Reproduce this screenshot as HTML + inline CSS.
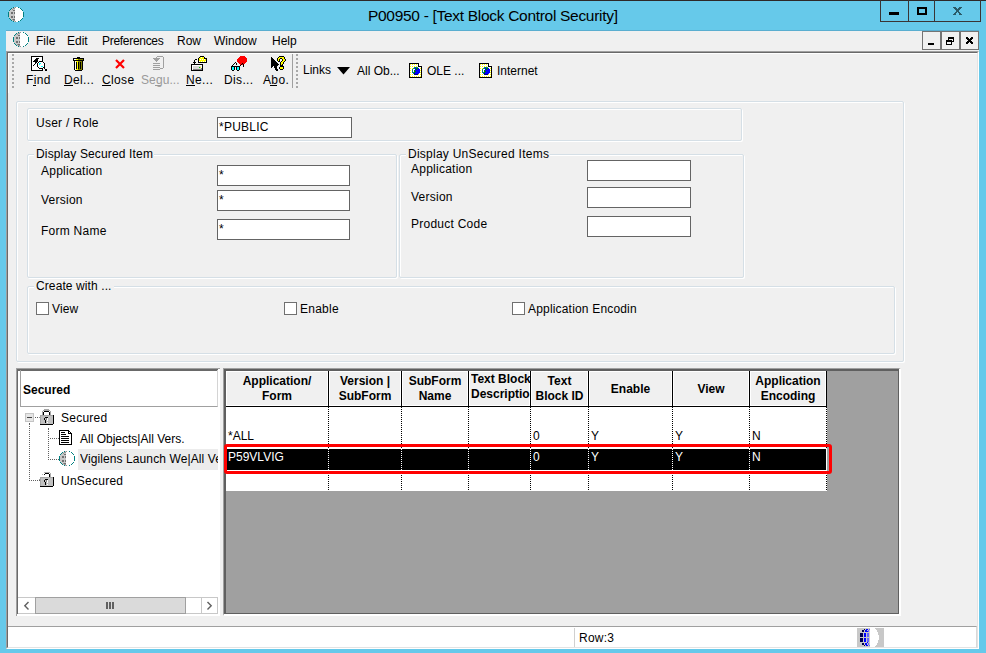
<!DOCTYPE html>
<html><head><meta charset="utf-8">
<style>
*{margin:0;padding:0;box-sizing:border-box}
html,body{width:986px;height:653px;overflow:hidden}
body{position:relative;background:#66c9ea;font-family:"Liberation Sans",sans-serif;font-size:12px;color:#000}
.a{position:absolute}
.t{position:absolute;white-space:nowrap;line-height:1}
svg{position:absolute;overflow:visible}
.gb{position:absolute;border:1px solid #d5dfe6;border-radius:2px;box-shadow:inset 1px 1px 0 #fff,1px 1px 0 #fff}
.ed{position:absolute;background:#fff;border:1px solid #646464}
.cb{position:absolute;width:13px;height:13px;background:#fff;border:1px solid #707070}
.hd{position:absolute;font-weight:bold;text-align:center;line-height:15px;white-space:nowrap}
.vl{position:absolute;width:1px;background:#000}
.dl{position:absolute;width:1px;background:repeating-linear-gradient(#000 0 1px,transparent 1px 2px)}
.dh{position:absolute;height:1px;background:repeating-linear-gradient(90deg,#000 0 1px,transparent 1px 2px)}
.tdl{position:absolute;width:1px;border-left:1px dotted #606060}
.tdh{position:absolute;height:1px;border-top:1px dotted #606060}
</style></head><body>
<svg width="0" height="0" style="position:absolute">
<defs>
<pattern id="chk" width="2" height="2" patternUnits="userSpaceOnUse"><rect width="2" height="2" fill="#c8c8c8"/><rect width="1" height="1" fill="#8a8a8a"/></pattern>
<pattern id="ychk" width="2" height="2" patternUnits="userSpaceOnUse"><rect width="2" height="2" fill="#fff"/><rect width="1" height="1" fill="#ff0"/><rect x="1" y="1" width="1" height="1" fill="#ff0"/></pattern>
<g id="globe" shape-rendering="crispEdges"><path d="M6 0h1v1h-1zM4 1h3v1h-3zM3 2h4v1h-4zM2 3h5v1h-5zM1 4h6v1h-6zM1 5h6v1h-6zM1 6h6v1h-6zM1 7h6v1h-6zM1 8h6v1h-6zM1 9h6v1h-6zM1 10h6v1h-6zM2 11h5v1h-5zM3 12h4v1h-4zM4 13h3v1h-3zM6 14h1v1h-1z" fill="#c8c8c8"/><path d="M7 0h3v1h-3zM7 1h5v1h-5zM7 2h6v1h-6zM7 3h7v1h-7zM7 4h8v1h-8zM7 5h8v1h-8zM7 6h8v1h-8zM7 7h8v1h-8zM7 8h8v1h-8zM7 9h8v1h-8zM7 10h8v1h-8zM7 11h7v1h-7zM7 12h6v1h-6zM7 13h5v1h-5zM7 14h3v1h-3z" fill="#fff"/><path d="M3 5h2v2h-2zM6 5h1v2h-1zM3 9h2v2h-2zM6 9h1v2h-1zM5 3h2v1h-2zM5 12h2v1h-2z" fill="#707070"/><path d="M7 0h1v1h-1zM7 14h1v1h-1zM5 1h2v1h-2zM5 13h2v1h-2zM4 2h1v1h-1zM4 12h1v1h-1z" fill="#959595"/><path d="M5 0h1v1h-1zM10 0h1v1h-1zM3 1h1v1h-1zM12 1h1v1h-1zM2 2h1v1h-1zM13 2h1v1h-1zM1 3h1v1h-1zM14 3h1v1h-1zM0 5h1v5h-1zM15 5h1v5h-1zM1 11h1v1h-1zM14 11h1v1h-1zM2 12h1v1h-1zM13 12h1v1h-1zM3 13h1v1h-1zM12 13h1v1h-1zM5 14h1v1h-1zM10 14h1v1h-1z" fill="#008080"/></g>
<g id="lockbody" shape-rendering="crispEdges">
<rect x="2" y="7" width="13" height="9" fill="#c0c0c0"/>
<rect x="2" y="7" width="13" height="1" fill="#a4a4a4"/><rect x="2" y="7" width="1" height="9" fill="#a4a4a4"/>
<rect x="15" y="7" width="1" height="9" fill="#000"/><rect x="2" y="16" width="13" height="1" fill="#000"/>
<rect x="1" y="9" width="1" height="1" fill="#999"/>
<path d="M7 9h3v1h-3zM6 10h1v2h-1zM7 12h1v3h-1z" fill="#000"/>
<path d="M8 10h1v2h-1z" fill="#808080"/>
<path d="M9 10h1v3h-1zM9 14h1v1h-1z" fill="#fff"/>
</g>
<g id="lock" shape-rendering="crispEdges">
<path d="M6 1h5v1h-5zM5 2h7v1h-7zM4 3h1v4h-1zM12 3h1v4h-1z" fill="#a8a8a8"/>
<path d="M6 3h5v1h-5zM5 4h1v3h-1zM11 4h1v3h-1z" fill="#000"/>
<use href="#lockbody"/>
</g>
<g id="ulock" shape-rendering="crispEdges">
<path d="M6 2h6v1h-6zM12 3h1v4h-1zM4 4h1v1h-1z" fill="#b0b0b0"/>
<path d="M7 3h4v1h-4zM6 4h1v1h-1zM11 4h1v3h-1z" fill="#000"/>
<use href="#lockbody"/>
</g>
<g id="ydoc">
<path d="M0.5 0.5 H9.5 L12.5 3.5 V14.5 H0.5 Z" fill="url(#ychk)" stroke="#000" stroke-width="1"/>
<path d="M9.5 0.5 V3.5 H12.5" fill="#fff" stroke="#000" stroke-width="1"/>
<circle cx="6.5" cy="8" r="3.6" fill="#0000ff"/>
<path d="M3 8 Q3.5 5 6 4.5 L8 5.5 L6.5 7 L7 9.5 L5 10 Z" fill="#008080"/>
<path d="M4 6.5 L6 8 L4.5 9.5 Z" fill="#fff"/>
<path d="M6.5 6 L8.5 6.5 L7 9 Z" fill="#008000"/>
</g>
</defs>
</svg>

<!-- top border -->
<div class="a" style="left:0;top:0;width:986px;height:1px;background:#2e2828"></div>
<svg style="left:8px;top:7px" width="16" height="16"><use href="#globe"/></svg>
<!-- title -->
<div class="t" style="left:368px;top:8px;font-size:15.5px;color:#000;letter-spacing:-0.3px">P00950 - [Text Block Control Security]</div>
<!-- window buttons -->
<div class="a" style="left:880px;top:0;width:101px;height:22px;border:1px solid #3a3434;border-top:none"></div>
<div class="a" style="left:908px;top:0;width:1px;height:22px;background:#3a3434"></div>
<div class="a" style="left:934px;top:0;width:1px;height:22px;background:#3a3434"></div>
<div class="a" style="left:889px;top:12px;width:10px;height:3px;background:#000"></div>
<div class="a" style="left:917px;top:7px;width:10px;height:8px;border:2px solid #000"></div>
<svg style="left:953px;top:7px" width="9" height="8" shape-rendering="crispEdges"><path d="M0 0h3v1h-3zM6 0h3v1h-3zM1 1h3v1h-3zM5 1h3v1h-3zM2 2h5v1h-5zM3 3h3v2h-3zM2 5h2v1h-2zM5 5h2v1h-2zM1 6h2v1h-2zM6 6h2v1h-2zM0 7h3v1h-3zM6 7h3v1h-3z" fill="#2a5a68"/></svg>

<!-- MDI child -->
<div class="a" style="left:6px;top:30px;width:973px;height:619px;background:#f0f0f0;border-top:1px solid #5aaed0"></div>
<svg style="left:13px;top:32px" width="16" height="16"><use href="#globe"/></svg>
<!-- menu -->
<div class="t" style="left:36px;top:35px">File</div>
<div class="t" style="left:67px;top:35px">Edit</div>
<div class="t" style="left:102px;top:35px;letter-spacing:-0.3px">Preferences</div>
<div class="t" style="left:177px;top:35px">Row</div>
<div class="t" style="left:214px;top:35px">Window</div>
<div class="t" style="left:272px;top:35px">Help</div>
<!-- MDI buttons -->
<div class="a" style="left:922px;top:31px;width:19px;height:19px;background:#f0f0f0;border:1px solid #747474"></div>
<div class="a" style="left:941px;top:31px;width:19px;height:19px;background:#f0f0f0;border:1px solid #747474"></div>
<div class="a" style="left:960px;top:31px;width:19px;height:19px;background:#f0f0f0;border:1px solid #747474"></div>
<div class="a" style="left:928px;top:43px;width:6px;height:2px;background:#000"></div>
<div class="a" style="left:948px;top:37px;width:6px;height:5px;border:1px solid #000;border-top-width:2px"></div>
<div class="a" style="left:946px;top:40px;width:6px;height:5px;border:1px solid #000;border-top-width:2px;background:#f0f0f0"></div>
<svg style="left:966px;top:37px" width="7" height="7" shape-rendering="crispEdges"><path d="M0 0h2v1h-2zM5 0h2v1h-2zM0 1h3v1h-3zM4 1h3v1h-3zM1 2h5v1h-5zM2 3h3v1h-3zM1 4h5v1h-5zM0 5h3v1h-3zM4 5h3v1h-3zM0 6h2v1h-2zM5 6h2v1h-2z" fill="#000"/></svg>

<!-- client sunken area -->
<div class="a" style="left:6px;top:51px;width:973px;height:598px;border-left:1px solid #a0a0a0;border-top:1px solid #a0a0a0;border-right:1px solid #fff;border-bottom:1px solid #fff"></div>
<div class="a" style="left:7px;top:52px;width:971px;height:596px;border-left:1px solid #696969;border-top:1px solid #696969;border-right:1px solid #e3e3e3;border-bottom:1px solid #e3e3e3"></div>
<div class="a" style="left:8px;top:53px;width:969px;height:1px;background:#fff"></div>
<div class="a" style="left:8px;top:53px;width:1px;height:40px;background:#fff"></div>

<!-- toolbar -->
<div class="a" style="left:12px;top:54px;width:2px;height:35px;background:repeating-linear-gradient(#a8a8a8 0 2px,transparent 2px 4px)"></div>
<div class="a" style="left:33px;top:85px;width:3px;height:1px;background:#000"></div>
<div class="a" style="left:64px;top:85px;width:9px;height:1px;background:#000"></div>
<div class="a" style="left:102px;top:85px;width:9px;height:1px;background:#000"></div>
<div class="a" style="left:155px;top:85px;width:6px;height:1px;background:#9a9a9a"></div>
<div class="a" style="left:186px;top:85px;width:9px;height:1px;background:#000"></div>
<div class="a" style="left:270px;top:85px;width:7px;height:1px;background:#000"></div>
<!-- toolbar icons -->
<svg style="left:29px;top:54px" width="18" height="18" shape-rendering="crispEdges"><path d="M2 2h12v1h-12zM2 3h1v1h-1zM13 3h1v1h-1zM2 4h1v1h-1zM7 4h3v1h-3zM13 4h1v1h-1zM2 5h1v1h-1zM6 5h3v1h-3zM13 5h1v1h-1zM2 6h1v1h-1zM5 6h4v1h-4zM13 6h1v1h-1zM2 7h1v1h-1zM4 7h5v1h-5zM10 7h4v1h-4zM2 8h1v1h-1zM6 8h2v1h-2zM9 8h1v1h-1zM14 8h1v1h-1zM2 9h1v1h-1zM6 9h1v1h-1zM8 9h1v1h-1zM15 9h1v1h-1zM2 10h1v1h-1zM5 10h1v1h-1zM8 10h1v1h-1zM15 10h1v1h-1zM2 11h1v1h-1zM4 11h1v1h-1zM8 11h1v1h-1zM15 11h1v1h-1zM2 12h1v1h-1zM8 12h1v1h-1zM15 12h1v1h-1zM2 13h1v1h-1zM9 13h1v1h-1zM14 13h2v1h-2zM2 14h1v1h-1zM10 14h4v1h-4zM15 14h1v1h-1zM2 15h1v1h-1zM13 15h1v1h-1zM16 15h2v1h-2zM2 16h12v1h-12zM16 16h2v1h-2z" fill="#000"/><path d="M3 3h10v1h-10zM3 4h4v1h-4zM10 4h3v1h-3zM3 5h3v1h-3zM9 5h4v1h-4zM3 6h2v1h-2zM9 6h4v1h-4zM3 7h1v1h-1zM9 7h1v1h-1zM3 8h3v1h-3zM8 8h1v1h-1zM10 8h4v1h-4zM3 9h3v1h-3zM7 9h1v1h-1zM9 9h1v1h-1zM12 9h3v1h-3zM3 10h2v1h-2zM6 10h2v1h-2zM9 10h1v1h-1zM11 10h4v1h-4zM3 11h1v1h-1zM5 11h3v1h-3zM9 11h6v1h-6zM3 12h5v1h-5zM9 12h3v1h-3zM14 12h1v1h-1zM3 13h6v1h-6zM10 13h4v1h-4zM3 14h7v1h-7zM14 14h1v1h-1zM3 15h10v1h-10z" fill="#fff"/><path d="M10 9h2v1h-2zM10 10h1v1h-1zM12 12h2v1h-2z" fill="#0ff"/></svg>
<svg style="left:69px;top:54px" width="16" height="17" shape-rendering="crispEdges"><path d="M8 3h3v1h-3zM4 4h11v1h-11zM4 5h1v1h-1zM14 5h1v1h-1zM4 6h11v1h-11zM5 7h1v1h-1zM13 7h1v1h-1zM5 8h1v1h-1zM7 8h1v1h-1zM9 8h1v1h-1zM11 8h1v1h-1zM13 8h1v1h-1zM5 9h1v1h-1zM7 9h1v1h-1zM9 9h1v1h-1zM11 9h1v1h-1zM13 9h1v1h-1zM5 10h1v1h-1zM7 10h1v1h-1zM9 10h1v1h-1zM11 10h1v1h-1zM13 10h1v1h-1zM5 11h1v1h-1zM7 11h1v1h-1zM9 11h1v1h-1zM11 11h1v1h-1zM13 11h1v1h-1zM5 12h1v1h-1zM7 12h1v1h-1zM9 12h1v1h-1zM11 12h1v1h-1zM13 12h1v1h-1zM5 13h1v1h-1zM7 13h1v1h-1zM9 13h1v1h-1zM11 13h1v1h-1zM13 13h1v1h-1zM5 14h1v1h-1zM7 14h1v1h-1zM9 14h1v1h-1zM11 14h1v1h-1zM13 14h1v1h-1zM5 15h1v1h-1zM13 15h1v1h-1zM6 16h7v1h-7z" fill="#000"/><path d="M5 5h2v1h-2zM6 7h1v1h-1zM6 8h1v1h-1zM6 9h1v1h-1zM6 10h1v1h-1zM6 11h1v1h-1zM6 12h1v1h-1zM6 13h1v1h-1zM6 14h1v1h-1zM6 15h1v1h-1z" fill="#fff"/><path d="M7 5h2v1h-2zM7 7h2v1h-2zM8 8h1v1h-1zM8 9h1v1h-1zM8 10h1v1h-1zM8 11h1v1h-1zM8 12h1v1h-1zM8 13h1v1h-1zM8 14h1v1h-1zM7 15h2v1h-2z" fill="#ff0"/><path d="M9 5h5v1h-5zM9 7h4v1h-4zM10 8h1v1h-1zM12 8h1v1h-1zM10 9h1v1h-1zM12 9h1v1h-1zM10 10h1v1h-1zM12 10h1v1h-1zM10 11h1v1h-1zM12 11h1v1h-1zM10 12h1v1h-1zM12 12h1v1h-1zM10 13h1v1h-1zM12 13h1v1h-1zM10 14h1v1h-1zM12 14h1v1h-1zM9 15h4v1h-4z" fill="#808000"/></svg>
<svg style="left:150px;top:54px" width="14" height="16" shape-rendering="crispEdges"><path d="M7 2h6v1h-6zM6 3h1v1h-1zM13 3h1v1h-1zM3 4h7v1h-7zM13 4h1v1h-1zM4 5h5v1h-5zM13 5h1v1h-1zM5 6h3v1h-3zM13 6h1v1h-1zM6 7h1v1h-1zM13 7h1v1h-1zM13 8h1v1h-1zM3 9h7v1h-7zM13 9h1v1h-1zM13 10h1v1h-1zM3 11h7v1h-7zM13 11h1v1h-1zM13 12h1v1h-1zM3 13h7v1h-7zM13 13h1v1h-1zM10 14h3v1h-3zM3 15h7v1h-7z" fill="#a0a0a0"/></svg>
<svg style="left:188px;top:54px" width="19" height="17" shape-rendering="crispEdges"><path d="M12 2h4v1h-4zM11 3h1v1h-1zM16 3h1v1h-1zM10 4h1v1h-1zM16 4h3v1h-3zM7 5h2v1h-2zM10 5h1v1h-1zM18 5h1v1h-1zM6 6h1v1h-1zM10 6h1v1h-1zM18 6h1v1h-1zM6 7h1v1h-1zM10 7h1v1h-1zM18 7h1v1h-1zM5 8h3v1h-3zM10 8h9v1h-9zM6 9h1v1h-1zM3 10h12v1h-12zM3 11h1v1h-1zM14 11h1v1h-1zM3 12h1v1h-1zM14 12h1v1h-1zM3 13h1v1h-1zM14 13h1v1h-1zM3 14h1v1h-1zM14 14h1v1h-1zM3 15h1v1h-1zM14 15h1v1h-1zM3 16h12v1h-12z" fill="#000"/><path d="M12 3h1v1h-1zM14 3h2v1h-2zM11 4h5v1h-5zM11 5h1v1h-1zM13 5h1v1h-1zM15 5h1v1h-1zM17 5h1v1h-1zM11 6h7v1h-7zM12 7h1v1h-1zM14 7h1v1h-1zM16 7h1v1h-1z" fill="#ff0"/><path d="M13 3h1v1h-1zM12 5h1v1h-1zM14 5h1v1h-1zM16 5h1v1h-1zM11 7h1v1h-1zM13 7h1v1h-1zM15 7h1v1h-1zM17 7h1v1h-1zM4 11h10v1h-10zM4 12h1v1h-1zM13 12h1v1h-1zM4 13h1v1h-1zM13 13h1v1h-1zM4 14h1v1h-1zM4 15h1v1h-1z" fill="#fff"/><path d="M5 12h8v1h-8zM5 13h6v1h-6zM5 14h8v1h-8z" fill="#d8d8d8"/><path d="M11 13h1v1h-1z" fill="#00c000"/><path d="M12 13h1v1h-1z" fill="#ffff00"/><path d="M13 14h1v1h-1zM5 15h9v1h-9z" fill="#808080"/></svg>
<svg style="left:229px;top:54px" width="18" height="18" shape-rendering="crispEdges"><path d="M11 2h5v1h-5zM10 3h7v1h-7zM9 4h9v1h-9zM8 5h10v1h-10zM8 6h10v1h-10zM8 7h10v1h-10zM9 8h8v1h-8zM10 9h3v1h-3zM14 9h2v1h-2zM11 10h1v1h-1zM13 10h1v1h-1z" fill="#f00"/><path d="M6 8h1v1h-1zM5 9h1v1h-1zM7 9h1v1h-1zM13 9h1v1h-1zM4 10h1v1h-1zM7 10h1v1h-1zM12 10h1v1h-1zM14 10h1v1h-1zM3 11h1v1h-1zM11 11h1v1h-1zM14 11h1v1h-1zM2 12h9v1h-9zM14 12h1v1h-1zM2 13h1v1h-1zM5 13h1v1h-1zM7 13h1v1h-1zM10 13h1v1h-1zM2 14h1v1h-1zM5 14h1v1h-1zM7 14h1v1h-1zM10 14h1v1h-1zM2 15h1v1h-1zM5 15h1v1h-1zM7 15h1v1h-1zM10 15h1v1h-1zM3 16h2v1h-2zM8 16h2v1h-2z" fill="#000"/><path d="M3 13h2v1h-2zM8 13h2v1h-2zM3 14h2v1h-2zM8 14h2v1h-2zM3 15h2v1h-2zM8 15h2v1h-2z" fill="#0ff"/></svg>
<svg style="left:268px;top:54px" width="18" height="18" shape-rendering="crispEdges"><path d="M11 2h5v1h-5zM3 3h1v1h-1zM10 3h1v1h-1zM16 3h1v1h-1zM3 4h2v1h-2zM9 4h1v1h-1zM12 4h2v1h-2zM16 4h1v1h-1zM3 5h3v1h-3zM9 5h1v1h-1zM11 5h1v1h-1zM14 5h1v1h-1zM17 5h1v1h-1zM3 6h4v1h-4zM9 6h1v1h-1zM11 6h1v1h-1zM14 6h1v1h-1zM17 6h1v1h-1zM3 7h5v1h-5zM10 7h2v1h-2zM13 7h1v1h-1zM16 7h1v1h-1zM3 8h6v1h-6zM12 8h1v1h-1zM15 8h1v1h-1zM3 9h7v1h-7zM12 9h1v1h-1zM15 9h1v1h-1zM3 10h8v1h-8zM12 10h1v1h-1zM14 10h1v1h-1zM3 11h7v1h-7zM12 11h3v1h-3zM3 12h2v1h-2zM6 12h3v1h-3zM12 12h4v1h-4zM3 13h1v1h-1zM6 13h3v1h-3zM11 13h1v1h-1zM15 13h1v1h-1zM7 14h2v1h-2zM11 14h1v1h-1zM15 14h1v1h-1zM7 15h3v1h-3zM12 15h3v1h-3zM8 16h2v1h-2z" fill="#000"/><path d="M11 3h5v1h-5zM10 4h2v1h-2zM14 4h2v1h-2zM10 5h1v1h-1zM15 5h2v1h-2zM10 6h1v1h-1zM15 6h2v1h-2zM14 7h2v1h-2zM13 8h2v1h-2zM13 9h2v1h-2zM13 10h1v1h-1zM12 13h3v1h-3zM12 14h3v1h-3z" fill="#ff0"/><path d="M12 5h2v1h-2zM12 6h2v1h-2zM5 12h1v1h-1z" fill="#fff"/></svg>
<svg style="left:115px;top:59px" width="10" height="10"><path d="M1 1 L9 9 M9 1 L1 9" stroke="#f00" stroke-width="2.2"/></svg>

<div class="t" style="left:26px;top:74px;letter-spacing:0.35px">Find</div>
<div class="t" style="left:64px;top:74px;letter-spacing:0.35px">Del...</div>
<div class="t" style="left:102px;top:74px;letter-spacing:0.35px">Close</div>
<div class="t" style="left:141px;top:74px;color:#9a9a9a;letter-spacing:0.1px">Segu...</div>
<div class="t" style="left:186px;top:74px;letter-spacing:0.35px">Ne...</div>
<div class="t" style="left:224px;top:74px;letter-spacing:0.35px">Dis...</div>
<div class="t" style="left:263px;top:74px;letter-spacing:0.35px">Abo.</div>
<div class="a" style="left:292px;top:54px;width:1px;height:34px;background:#a0a0a0"></div>
<div class="a" style="left:296px;top:54px;width:2px;height:35px;background:repeating-linear-gradient(#a8a8a8 0 2px,transparent 2px 4px)"></div>
<div class="t" style="left:303px;top:64px">Links</div>
<svg style="left:337px;top:67px" width="14" height="8"><path d="M0 0 H13 L6.5 7.5 Z" fill="#000"/></svg>
<div class="t" style="left:357px;top:65px">All Ob...</div>
<svg style="left:405px;top:60px" width="17" height="18" shape-rendering="crispEdges"><path d="M4 3h10v1h-10zM4 4h1v1h-1zM13 4h1v1h-1zM4 5h1v1h-1zM13 5h1v1h-1zM4 6h1v1h-1zM13 6h4v1h-4zM4 7h1v1h-1zM16 7h1v1h-1zM4 8h1v1h-1zM16 8h1v1h-1zM4 9h1v1h-1zM16 9h1v1h-1zM4 10h1v1h-1zM16 10h1v1h-1zM4 11h1v1h-1zM16 11h1v1h-1zM4 12h1v1h-1zM16 12h1v1h-1zM4 13h1v1h-1zM16 13h1v1h-1zM4 14h1v1h-1zM16 14h1v1h-1zM4 15h1v1h-1zM16 15h1v1h-1zM4 16h1v1h-1zM16 16h1v1h-1zM4 17h13v1h-13z" fill="#000"/><path d="M5 4h1v1h-1zM7 4h1v1h-1zM9 4h1v1h-1zM11 4h1v1h-1zM5 6h1v1h-1zM7 6h1v1h-1zM9 6h1v1h-1zM11 6h1v1h-1zM5 8h1v1h-1zM7 8h1v1h-1zM15 8h1v1h-1zM5 10h1v1h-1zM15 10h1v1h-1zM5 12h1v1h-1zM15 12h1v1h-1zM5 14h1v1h-1zM7 14h1v1h-1zM13 14h1v1h-1zM15 14h1v1h-1zM5 16h1v1h-1zM7 16h1v1h-1zM9 16h1v1h-1zM11 16h1v1h-1zM13 16h1v1h-1zM15 16h1v1h-1z" fill="#ff0"/><path d="M6 4h1v1h-1zM8 4h1v1h-1zM10 4h1v1h-1zM12 4h1v1h-1zM14 4h1v1h-1zM5 5h8v1h-8zM14 5h2v1h-2zM6 6h1v1h-1zM8 6h1v1h-1zM10 6h1v1h-1zM12 6h1v1h-1zM5 7h4v1h-4zM13 7h3v1h-3zM6 8h1v1h-1zM14 8h1v1h-1zM5 9h2v1h-2zM8 9h2v1h-2zM15 9h1v1h-1zM6 10h1v1h-1zM8 10h1v1h-1zM5 11h2v1h-2zM8 11h1v1h-1zM15 11h1v1h-1zM6 12h1v1h-1zM5 13h3v1h-3zM14 13h2v1h-2zM6 14h1v1h-1zM8 14h1v1h-1zM14 14h1v1h-1zM5 15h11v1h-11zM6 16h1v1h-1zM8 16h1v1h-1zM10 16h1v1h-1zM12 16h1v1h-1zM14 16h1v1h-1z" fill="#fff"/><path d="M9 7h4v1h-4zM8 8h2v1h-2zM7 9h1v1h-1zM7 10h1v1h-1zM7 11h1v1h-1zM7 12h2v1h-2zM8 13h1v1h-1z" fill="#008080"/><path d="M10 8h1v1h-1zM13 8h1v1h-1zM10 9h1v1h-1zM12 9h3v1h-3zM10 10h5v1h-5zM11 11h4v1h-4zM10 12h5v1h-5zM10 13h4v1h-4z" fill="#0000ff"/><path d="M11 8h2v1h-2zM11 9h1v1h-1zM9 10h1v1h-1zM9 11h2v1h-2zM9 12h1v1h-1z" fill="#008000"/><path d="M9 13h1v1h-1zM9 14h4v1h-4z" fill="#000080"/></svg>
<div class="t" style="left:427px;top:65px">OLE ...</div>
<svg style="left:475px;top:60px" width="17" height="18" shape-rendering="crispEdges"><path d="M4 3h10v1h-10zM4 4h1v1h-1zM13 4h1v1h-1zM4 5h1v1h-1zM13 5h1v1h-1zM4 6h1v1h-1zM13 6h4v1h-4zM4 7h1v1h-1zM16 7h1v1h-1zM4 8h1v1h-1zM16 8h1v1h-1zM4 9h1v1h-1zM16 9h1v1h-1zM4 10h1v1h-1zM16 10h1v1h-1zM4 11h1v1h-1zM16 11h1v1h-1zM4 12h1v1h-1zM16 12h1v1h-1zM4 13h1v1h-1zM16 13h1v1h-1zM4 14h1v1h-1zM16 14h1v1h-1zM4 15h1v1h-1zM16 15h1v1h-1zM4 16h1v1h-1zM16 16h1v1h-1zM4 17h13v1h-13z" fill="#000"/><path d="M5 4h1v1h-1zM7 4h1v1h-1zM9 4h1v1h-1zM11 4h1v1h-1zM5 6h1v1h-1zM7 6h1v1h-1zM9 6h1v1h-1zM11 6h1v1h-1zM5 8h1v1h-1zM7 8h1v1h-1zM15 8h1v1h-1zM5 10h1v1h-1zM15 10h1v1h-1zM5 12h1v1h-1zM15 12h1v1h-1zM5 14h1v1h-1zM7 14h1v1h-1zM13 14h1v1h-1zM15 14h1v1h-1zM5 16h1v1h-1zM7 16h1v1h-1zM9 16h1v1h-1zM11 16h1v1h-1zM13 16h1v1h-1zM15 16h1v1h-1z" fill="#ff0"/><path d="M6 4h1v1h-1zM8 4h1v1h-1zM10 4h1v1h-1zM12 4h1v1h-1zM14 4h1v1h-1zM5 5h8v1h-8zM14 5h2v1h-2zM6 6h1v1h-1zM8 6h1v1h-1zM10 6h1v1h-1zM12 6h1v1h-1zM5 7h4v1h-4zM13 7h3v1h-3zM6 8h1v1h-1zM14 8h1v1h-1zM5 9h2v1h-2zM8 9h2v1h-2zM15 9h1v1h-1zM6 10h1v1h-1zM8 10h1v1h-1zM5 11h2v1h-2zM8 11h1v1h-1zM15 11h1v1h-1zM6 12h1v1h-1zM5 13h3v1h-3zM14 13h2v1h-2zM6 14h1v1h-1zM8 14h1v1h-1zM14 14h1v1h-1zM5 15h11v1h-11zM6 16h1v1h-1zM8 16h1v1h-1zM10 16h1v1h-1zM12 16h1v1h-1zM14 16h1v1h-1z" fill="#fff"/><path d="M9 7h4v1h-4zM8 8h2v1h-2zM7 9h1v1h-1zM7 10h1v1h-1zM7 11h1v1h-1zM7 12h2v1h-2zM8 13h1v1h-1z" fill="#008080"/><path d="M10 8h1v1h-1zM13 8h1v1h-1zM10 9h1v1h-1zM12 9h3v1h-3zM10 10h5v1h-5zM11 11h4v1h-4zM10 12h5v1h-5zM10 13h4v1h-4z" fill="#0000ff"/><path d="M11 8h2v1h-2zM11 9h1v1h-1zM9 10h1v1h-1zM9 11h2v1h-2zM9 12h1v1h-1z" fill="#008000"/><path d="M9 13h1v1h-1zM9 14h4v1h-4z" fill="#000080"/></svg>
<div class="t" style="left:497px;top:65px">Internet</div>

<!-- form panel -->
<div class="gb" style="left:16px;top:101px;width:888px;height:261px"></div>
<div class="gb" style="left:27px;top:108px;width:715px;height:33px"></div>
<div class="t" style="left:36px;top:117px;letter-spacing:0.25px">User / Role</div>
<div class="ed" style="left:217px;top:117px;width:135px;height:21px"></div>
<div class="t" style="left:219px;top:121px;letter-spacing:0.25px">*PUBLIC</div>

<div class="gb" style="left:27px;top:154px;width:370px;height:124px"></div>
<div class="a" style="left:34px;top:150px;width:120px;height:8px;background:#f0f0f0"></div>
<div class="t" style="left:36px;top:148px;letter-spacing:0.15px">Display Secured Item</div>
<div class="t" style="left:41px;top:165px;letter-spacing:0.25px">Application</div>
<div class="t" style="left:41px;top:194px;letter-spacing:0.25px">Version</div>
<div class="t" style="left:41px;top:225px;letter-spacing:0.25px">Form Name</div>
<div class="ed" style="left:217px;top:165px;width:133px;height:21px"></div>
<div class="ed" style="left:217px;top:190px;width:133px;height:21px"></div>
<div class="ed" style="left:217px;top:219px;width:133px;height:21px"></div>
<div class="t" style="left:219px;top:169px">*</div>
<div class="t" style="left:219px;top:194px">*</div>
<div class="t" style="left:219px;top:223px">*</div>

<div class="gb" style="left:399px;top:154px;width:345px;height:124px"></div>
<div class="a" style="left:406px;top:150px;width:144px;height:8px;background:#f0f0f0"></div>
<div class="t" style="left:408px;top:148px;letter-spacing:0.25px">Display UnSecured Items</div>
<div class="t" style="left:411px;top:163px;letter-spacing:0.25px">Application</div>
<div class="t" style="left:411px;top:191px;letter-spacing:0.25px">Version</div>
<div class="t" style="left:411px;top:218px;letter-spacing:0.25px">Product Code</div>
<div class="ed" style="left:587px;top:160px;width:104px;height:21px"></div>
<div class="ed" style="left:587px;top:187px;width:104px;height:21px"></div>
<div class="ed" style="left:587px;top:216px;width:104px;height:21px"></div>

<div class="gb" style="left:27px;top:286px;width:868px;height:68px"></div>
<div class="a" style="left:34px;top:282px;width:80px;height:8px;background:#f0f0f0"></div>
<div class="t" style="left:36px;top:280px;letter-spacing:0.1px">Create with ...</div>
<div class="cb" style="left:36px;top:302px"></div>
<div class="t" style="left:52px;top:303px;letter-spacing:0.1px">View</div>
<div class="cb" style="left:284px;top:302px"></div>
<div class="t" style="left:300px;top:303px;letter-spacing:0.25px">Enable</div>
<div class="cb" style="left:512px;top:302px"></div>
<div class="t" style="left:528px;top:303px;letter-spacing:0.18px">Application Encodin</div>

<!-- tree panel -->
<div class="a" style="left:16px;top:368px;width:204px;height:248px;background:#fff;border-left:1px solid #a0a0a0;border-top:1px solid #a0a0a0"></div>
<div class="a" style="left:17px;top:369px;width:201px;height:245px;border-left:1px solid #696969;border-top:2px solid #696969"></div>
<div class="a" style="left:20px;top:370px;width:198px;height:37px;border:1px solid #a0a0a0;border-top:none;border-right-color:#d4d4d4"></div>
<div class="t" style="left:23px;top:384px;font-weight:bold">Secured</div>
<!-- tree -->
<div class="a" style="left:25px;top:413px;width:9px;height:9px;background:#e6e6e6;border:1px solid #c4c4c4"></div>
<div class="a" style="left:27px;top:417px;width:5px;height:1px;background:#444"></div>
<div class="tdh" style="left:35px;top:417px;width:5px"></div>
<div class="tdl" style="left:29px;top:423px;height:58px"></div>
<div class="tdh" style="left:31px;top:480px;width:9px"></div>
<div class="tdl" style="left:48px;top:428px;height:32px"></div>
<div class="tdh" style="left:50px;top:438px;width:9px"></div>
<div class="tdh" style="left:50px;top:459px;width:9px"></div>
<svg style="left:38px;top:408px" width="18" height="18"><use href="#lock"/></svg>
<svg style="left:38px;top:470px" width="18" height="18"><use href="#ulock"/></svg>
<div class="t" style="left:61px;top:412px;letter-spacing:0.25px">Secured</div>
<svg style="left:59px;top:430px" width="13" height="15" shape-rendering="crispEdges"><path d="M0 0h10v1h-10zM0 1h1v1h-1zM9 1h2v1h-2zM0 2h1v1h-1zM2 2h4v1h-4zM9 2h1v1h-1zM11 2h1v1h-1zM0 3h1v1h-1zM9 3h4v1h-4zM0 4h1v1h-1zM2 4h5v1h-5zM12 4h1v1h-1zM0 5h1v1h-1zM12 5h1v1h-1zM0 6h1v1h-1zM2 6h8v1h-8zM12 6h1v1h-1zM0 7h1v1h-1zM12 7h1v1h-1zM0 8h1v1h-1zM2 8h8v1h-8zM12 8h1v1h-1zM0 9h1v1h-1zM12 9h1v1h-1zM0 10h1v1h-1zM2 10h8v1h-8zM12 10h1v1h-1zM0 11h1v1h-1zM12 11h1v1h-1zM0 12h1v1h-1zM2 12h8v1h-8zM12 12h1v1h-1zM0 13h1v1h-1zM12 13h1v1h-1zM0 14h13v1h-13z" fill="#000"/><path d="M1 1h8v1h-8zM1 2h1v1h-1zM6 2h3v1h-3zM10 2h1v1h-1zM1 3h8v1h-8zM1 4h1v1h-1zM7 4h5v1h-5zM1 5h11v1h-11zM1 6h1v1h-1zM10 6h2v1h-2zM1 7h11v1h-11zM1 8h1v1h-1zM10 8h2v1h-2zM1 9h11v1h-11zM1 10h1v1h-1zM10 10h2v1h-2zM1 11h11v1h-11zM1 12h1v1h-1zM10 12h2v1h-2zM1 13h11v1h-11z" fill="#fff"/></svg>
<div class="t" style="left:80px;top:433px">All Objects|All Vers.</div>
<svg style="left:59px;top:451px" width="16" height="16"><use href="#globe"/></svg>
<div class="a" style="left:78px;top:449px;width:140px;height:21px;background:#ececec"></div>
<div class="a" style="left:80px;top:449px;width:138px;height:21px;overflow:hidden"><div class="t" style="left:0;top:4px;letter-spacing:0.1px">Vigilens Launch We|All Vers.</div></div>
<div class="t" style="left:61px;top:475px;letter-spacing:0.25px">UnSecured</div>
<!-- tree scrollbar -->
<div class="a" style="left:18px;top:597px;width:200px;height:17px;background:#fff;border:1px solid #c8c8c8;border-left:none"></div>
<div class="a" style="left:35px;top:597px;width:151px;height:17px;background:#dadada;border:1px solid #a0a0a0"></div>
<div class="a" style="left:201px;top:597px;width:1px;height:17px;background:#c8c8c8"></div>
<svg style="left:23px;top:601px" width="8" height="10"><path d="M5.5 1 L1.8 4.8 L5.5 8.6" fill="none" stroke="#606060" stroke-width="1.4"/></svg>
<svg style="left:206px;top:601px" width="8" height="10"><path d="M1.5 1 L5.2 4.8 L1.5 8.6" fill="none" stroke="#606060" stroke-width="1.4"/></svg>
<div class="a" style="left:106px;top:602px;width:2px;height:7px;background:#606060"></div>
<div class="a" style="left:109px;top:602px;width:2px;height:7px;background:#606060"></div>
<div class="a" style="left:112px;top:602px;width:2px;height:7px;background:#606060"></div>
<!-- grid -->
<div class="a" style="left:223px;top:368px;width:678px;height:248px;border-left:1px solid #a0a0a0;border-top:1px solid #a0a0a0;border-right:2px solid #fff;border-bottom:2px solid #fff"></div>
<div class="a" style="left:224px;top:369px;width:675px;height:245px;background:#a0a0a0;border-left:2px solid #5f5f5f;border-top:2px solid #5f5f5f;border-right:1px solid #5f5f5f;border-bottom:1px solid #5f5f5f"></div>
<div class="a" style="left:226px;top:371px;width:601px;height:120px;background:#fff"></div>
<!-- header cells -->
<div class="a" style="left:226px;top:371px;width:601px;height:35px;background:#f0f0f0"></div>
<div class="a" style="left:226px;top:371px;width:102px;height:35px;border:1px solid #fff"></div>
<div class="a" style="left:329px;top:371px;width:72px;height:35px;border:1px solid #fff"></div>
<div class="a" style="left:402px;top:371px;width:66px;height:35px;border:1px solid #fff"></div>
<div class="a" style="left:469px;top:371px;width:61px;height:35px;border:1px solid #fff"></div>
<div class="a" style="left:531px;top:371px;width:57px;height:35px;border:1px solid #fff"></div>
<div class="a" style="left:589px;top:371px;width:83px;height:35px;border:1px solid #fff"></div>
<div class="a" style="left:673px;top:371px;width:76px;height:35px;border:1px solid #fff"></div>
<div class="a" style="left:750px;top:371px;width:76px;height:35px;border:1px solid #fff"></div>
<div class="a" style="left:226px;top:406px;width:601px;height:1px;background:#000"></div>
<div class="vl" style="left:328px;top:371px;height:35px"></div>
<div class="vl" style="left:401px;top:371px;height:35px"></div>
<div class="vl" style="left:468px;top:371px;height:35px"></div>
<div class="vl" style="left:530px;top:371px;height:35px"></div>
<div class="vl" style="left:588px;top:371px;height:35px"></div>
<div class="vl" style="left:672px;top:371px;height:35px"></div>
<div class="vl" style="left:749px;top:371px;height:35px"></div>
<div class="vl" style="left:826px;top:371px;height:35px"></div>
<div class="dl" style="left:328px;top:407px;height:84px"></div>
<div class="dl" style="left:401px;top:407px;height:84px"></div>
<div class="dl" style="left:468px;top:407px;height:84px"></div>
<div class="dl" style="left:530px;top:407px;height:84px"></div>
<div class="dl" style="left:588px;top:407px;height:84px"></div>
<div class="dl" style="left:672px;top:407px;height:84px"></div>
<div class="dl" style="left:749px;top:407px;height:84px"></div>
<div class="dl" style="left:826px;top:407px;height:84px"></div>
<div class="hd" style="left:226px;top:374px;width:102px">Application/<br>Form</div>
<div class="hd" style="left:329px;top:374px;width:72px">Version |<br>SubForm</div>
<div class="hd" style="left:402px;top:374px;width:66px">SubForm<br>Name</div>
<div class="hd" style="left:471px;top:372px;width:59px;overflow:hidden;text-align:left">Text Block<br>Description</div>
<div class="hd" style="left:531px;top:374px;width:57px">Text<br>Block ID</div>
<div class="hd" style="left:589px;top:382px;width:83px">Enable</div>
<div class="hd" style="left:673px;top:382px;width:76px">View</div>
<div class="hd" style="left:750px;top:374px;width:76px">Application<br>Encoding</div>
<!-- rows -->
<div class="t" style="left:228px;top:430px">*ALL</div>
<div class="t" style="left:533px;top:430px">0</div>
<div class="t" style="left:591px;top:430px">Y</div>
<div class="t" style="left:675px;top:430px">Y</div>
<div class="t" style="left:752px;top:430px">N</div>
<div class="a" style="left:224px;top:444px;width:608px;height:30px;border:3px solid #f00;border-radius:3px"></div>
<div class="a" style="left:227px;top:449px;width:599px;height:21px;background:#000"></div>
<div class="a" style="left:328px;top:449px;width:1px;height:21px;background:repeating-linear-gradient(#fff 0 1px,transparent 1px 2px)"></div>
<div class="a" style="left:401px;top:449px;width:1px;height:21px;background:repeating-linear-gradient(#fff 0 1px,transparent 1px 2px)"></div>
<div class="a" style="left:468px;top:449px;width:1px;height:21px;background:repeating-linear-gradient(#fff 0 1px,transparent 1px 2px)"></div>
<div class="a" style="left:530px;top:449px;width:1px;height:21px;background:repeating-linear-gradient(#fff 0 1px,transparent 1px 2px)"></div>
<div class="a" style="left:588px;top:449px;width:1px;height:21px;background:repeating-linear-gradient(#fff 0 1px,transparent 1px 2px)"></div>
<div class="a" style="left:672px;top:449px;width:1px;height:21px;background:repeating-linear-gradient(#fff 0 1px,transparent 1px 2px)"></div>
<div class="a" style="left:749px;top:449px;width:1px;height:21px;background:repeating-linear-gradient(#fff 0 1px,transparent 1px 2px)"></div>
<div class="a" style="left:826px;top:449px;width:1px;height:21px;background:repeating-linear-gradient(#fff 0 1px,transparent 1px 2px)"></div>
<div class="t" style="left:228px;top:451px;color:#fff">P59VLVIG</div>
<div class="t" style="left:533px;top:451px;color:#fff">0</div>
<div class="t" style="left:591px;top:451px;color:#fff">Y</div>
<div class="t" style="left:675px;top:451px;color:#fff">Y</div>
<div class="t" style="left:752px;top:451px;color:#fff">N</div>

<!-- status bar -->
<div class="a" style="left:8px;top:626px;width:969px;height:22px;background:#fff;border-top:1px solid #a0a0a0;border-right:1px solid #d8d8d8;border-bottom:1px solid #e3e3e3"></div>
<svg style="left:857px;top:628px" width="27" height="19" shape-rendering="crispEdges">
<rect x="0" y="0" width="27" height="19" fill="#c8c8c8"/>
<path d="M13 0h5v1h1v1h1v2h1v3h1v5h-1v3h-1v2h-1v1h-1v1h-5z" fill="#fff"/>
<path d="M3 5h3v4h-3zM3 10h3v4h-3zM5 2h2v2h-2zM7 1h1v1h-1zM5 15h2v2h-2zM7 17h1v1h-1z" fill="#000050"/>
<path d="M7 5h2v4h-2zM7 10h2v4h-2zM8 2h2v2h-2zM9 1h2v1h-2zM8 15h2v2h-2zM9 17h2v1h-2zM10 3h1v1h-1zM10 14h1v1h-1z" fill="#0000ff"/>
<path d="M10 5h2v4h-2zM10 10h2v4h-2zM11 2h1v2h-1zM12 1h1v1h-1zM11 15h1v2h-1zM12 17h1v1h-1z" fill="#6464ff"/>
</svg>
<div class="a" style="left:574px;top:628px;width:1px;height:19px;background:#d0d0d0"></div>
<div class="t" style="left:579px;top:632px;letter-spacing:0.25px">Row:3</div>
</body></html>
